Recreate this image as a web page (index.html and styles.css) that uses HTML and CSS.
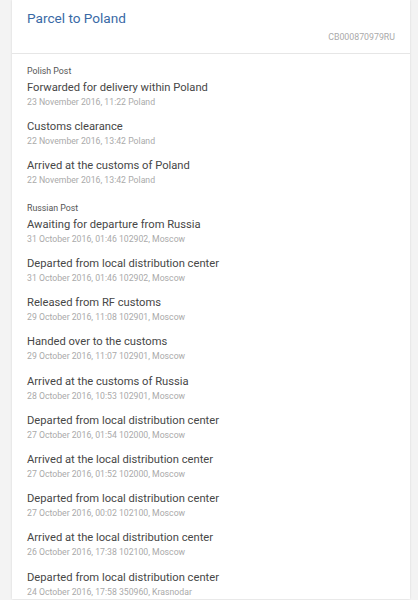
FILE: index.html
```html
<!DOCTYPE html>
<html lang="en">
  <head>
    <meta charset="UTF-8" />
    <title>Parcel to Poland</title>
    <link rel="stylesheet" href="styles.css">
  </head>
  <body>
    <div class="card">
      <div class="card-head">
        <h1 class="title">Parcel to Poland</h1>
        <div class="code">CB000870979RU</div>
      </div>
      <div class="card-body">
        <div class="group">
          <div class="carrier">Polish Post</div>
          <div class="event">
            <div class="event-name">Forwarded for delivery within Poland</div>
            <div class="event-meta">23 November 2016, 11:22 Poland</div>
          </div>
          <div class="event">
            <div class="event-name">Customs clearance</div>
            <div class="event-meta">22 November 2016, 13:42 Poland</div>
          </div>
          <div class="event">
            <div class="event-name">Arrived at the customs of Poland</div>
            <div class="event-meta">22 November 2016, 13:42 Poland</div>
          </div>
        </div>
        <div class="group">
          <div class="carrier">Russian Post</div>
          <div class="event">
            <div class="event-name">Awaiting for departure from Russia</div>
            <div class="event-meta">31 October 2016, 01:46 102902, Moscow</div>
          </div>
          <div class="event">
            <div class="event-name">Departed from local distribution center</div>
            <div class="event-meta">31 October 2016, 01:46 102902, Moscow</div>
          </div>
          <div class="event">
            <div class="event-name">Released from RF customs</div>
            <div class="event-meta">29 October 2016, 11:08 102901, Moscow</div>
          </div>
          <div class="event">
            <div class="event-name">Handed over to the customs</div>
            <div class="event-meta">29 October 2016, 11:07 102901, Moscow</div>
          </div>
          <div class="event">
            <div class="event-name">Arrived at the customs of Russia</div>
            <div class="event-meta">28 October 2016, 10:53 102901, Moscow</div>
          </div>
          <div class="event">
            <div class="event-name">Departed from local distribution center</div>
            <div class="event-meta">27 October 2016, 01:54 102000, Moscow</div>
          </div>
          <div class="event">
            <div class="event-name">Arrived at the local distribution center</div>
            <div class="event-meta">27 October 2016, 01:52 102000, Moscow</div>
          </div>
          <div class="event">
            <div class="event-name">Departed from local distribution center</div>
            <div class="event-meta">27 October 2016, 00:02 102100, Moscow</div>
          </div>
          <div class="event">
            <div class="event-name">Arrived at the local distribution center</div>
            <div class="event-meta">26 October 2016, 17:38 102100, Moscow</div>
          </div>
          <div class="event">
            <div class="event-name">Departed from local distribution center</div>
            <div class="event-meta">24 October 2016, 17:58 350960, Krasnodar</div>
          </div>
        </div>
      </div>
    </div>
  </body>
</html>
```

FILE: styles.css
```css
body {
  margin: 0;
  background-color: #f3f3f3;
  font-family: Roboto, "Noto Sans", sans-serif;
}
.card {
  margin: 0 8px 0 12px;
  background-color: #fff;
  box-shadow: 0 0 2px rgba(0, 0, 0, 0.12);
}
.card-head {
  padding: 9px 15px 10px 15px;
  border-bottom: 1px solid #e6e6e6;
}
.title {
  margin: 0;
  font-size: 13.6px;
  font-weight: normal;
  color: #3a6aa6;
  line-height: 18px;
}
.code {
  text-align: right;
  font-size: 8.8px;
  color: #aaa;
  margin-top: 4px;
  line-height: 12px;
}
.card-body {
  padding: 11px 15px 0 15px;
}
.group {
  margin-bottom: 14.5px;
}
.carrier {
  font-size: 8.8px;
  color: #555;
  line-height: 12px;
  margin-bottom: 3px;
}
.event {
  margin-bottom: 10.2px;
}
.event-name {
  font-size: 11.2px;
  color: #474747;
  line-height: 15px;
}
.event-meta {
  font-size: 8.7px;
  color: #aaa;
  line-height: 14px;
}
```
